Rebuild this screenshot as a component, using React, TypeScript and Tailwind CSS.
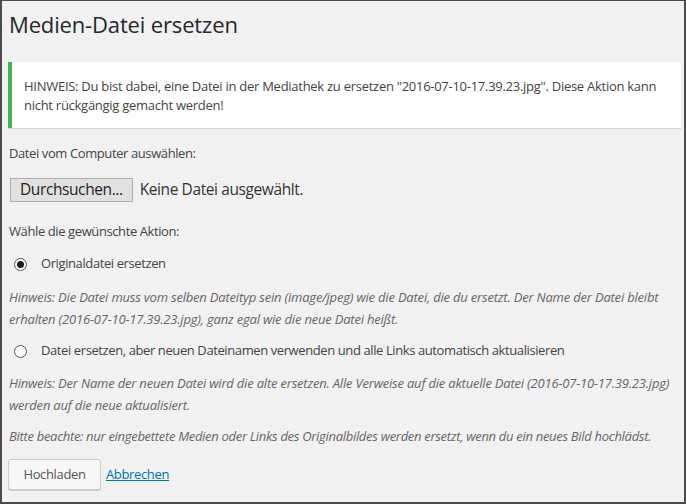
import React from "react";

export default function App() {
  const font = { fontFamily: '"Open Sans", "Noto Sans", Arial, sans-serif' };
  return (
    <div
      className="w-[686px] h-[504px] bg-[#f1f1f1] border-t border-r-2 border-l-2 border-b-2 border-[#4b4b4b] overflow-hidden box-border"
      style={font}
    >
      <div className="pl-[6px] pr-[3px]">
        <h1 className="pt-[9px] pl-[1px] text-[22px] leading-[29px] font-normal text-[#23282d] tracking-[-0.15px]">
          Medien-Datei ersetzen
        </h1>

        <div className="mt-[23px] h-[66px] bg-white border-l-4 border-[#46b450] shadow-[0_1px_1px_rgba(0,0,0,0.1)] pl-[12px] pr-[12px] pt-[15px]">
          <p className="text-[13px] leading-[19px] text-[#444] tracking-[-0.27px]">
            HINWEIS: Du bist dabei, eine Datei in der Mediathek zu ersetzen "2016-07-10-17.39.23.jpg". Diese Aktion kann
            <br />
            nicht rückgängig gemacht werden!
          </p>
        </div>

        <p className="mt-[15px] pl-[1px] text-[13px] leading-[20px] text-[#444] tracking-[-0.4px]">
          Datei vom Computer auswählen:
        </p>

        <div className="mt-[15px] flex items-center pl-[2px]">
          <div className="h-[24px] px-[9px] flex items-center bg-[#e1e1e1] border border-[#adadad] text-[15.5px] text-[#1e1e1e] tracking-[-0.4px]">
            Durchsuchen...
          </div>
          <span className="ml-[7px] text-[15.5px] text-[#333] tracking-[-0.4px]">Keine Datei ausgewählt.</span>
        </div>

        <p className="mt-[19px] pl-[1px] text-[13px] leading-[20px] text-[#444] tracking-[-0.4px]">
          Wähle die gewünschte Aktion:
        </p>

        <div className="mt-[13px] h-[20px] flex items-center pl-[6px]">
          <span className="w-[13px] h-[13px] rounded-full border border-[#555] bg-white flex items-center justify-center">
            <span className="w-[7px] h-[7px] rounded-full bg-[#1e1e1e]" />
          </span>
          <span className="ml-[14px] text-[13px] text-[#444] tracking-[-0.4px]">Originaldatei ersetzen</span>
        </div>

        <p className="mt-[12px] pl-[1px] text-[13px] leading-[22px] italic text-[#666] tracking-[-0.2px] whitespace-nowrap">
          Hinweis: Die Datei muss vom selben Dateityp sein (image/jpeg) wie die Datei, die du ersetzt. Der Name der Datei bleibt
          <br />
          erhalten (2016-07-10-17.39.23.jpg), ganz egal wie die neue Datei heißt.
        </p>

        <div className="mt-[11px] h-[20px] flex items-center pl-[6px]">
          <span className="w-[13px] h-[13px] rounded-full border border-[#555] bg-white" />
          <span className="ml-[14px] text-[13px] text-[#444] tracking-[-0.4px]">
            Datei ersetzen, aber neuen Dateinamen verwenden und alle Links automatisch aktualisieren
          </span>
        </div>

        <p className="mt-[11px] pl-[1px] text-[13px] leading-[22px] italic text-[#666] tracking-[-0.2px] whitespace-nowrap">
          Hinweis: Der Name der neuen Datei wird die alte ersetzen. Alle Verweise auf die aktuelle Datei (2016-07-10-17.39.23.jpg)
          <br />
          werden auf die neue aktualisiert.
        </p>

        <p className="mt-[9px] pl-[1px] text-[13px] leading-[22px] italic text-[#666] tracking-[-0.3px] whitespace-nowrap">
          Bitte beachte: nur eingebettete Medien oder Links des Originalbildes werden ersetzt, wenn du ein neues Bild hochlädst.
        </p>

        <div className="mt-[12px] flex items-center">
          <div className="w-[93px] h-[31px] flex items-center justify-center bg-[#f7f7f7] border border-[#ccc] rounded-[3px] shadow-[0_1px_0_#ccc] text-[13px] text-[#555] tracking-[-0.35px]">
            Hochladen
          </div>
          <a href="#" className="ml-[5px] text-[13px] text-[#0073aa] underline tracking-[-0.35px]">
            Abbrechen
          </a>
        </div>
      </div>
    </div>
  );
}
